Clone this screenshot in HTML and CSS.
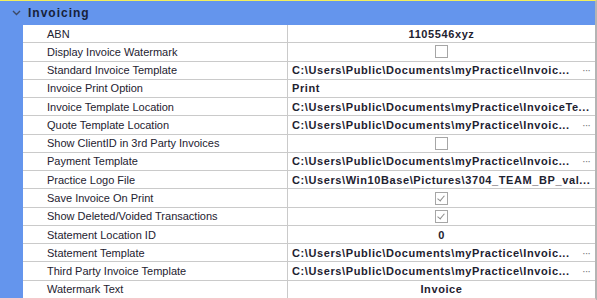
FILE: index.html
```html
<!DOCTYPE html>
<html lang="en">
    <head>
        <meta charset="UTF-8">
        <title>Invoicing</title>
        <link rel="stylesheet" href="styles.css">
    </head>
    <body>
        <div class="grid">
            <div class="category">
                <svg class="chevron" width="9" height="6" viewBox="0 0 9 6"><path d="M1 1 L4.5 4.5 L8 1" fill="none" stroke="#3d4a66" stroke-width="1.4"/></svg>
                <span>Invoicing</span>
            </div>
            <div class="body">
                <div class="gutter"></div>
                <div class="rows">
                    <div class="row"><div class="name">ABN</div><div class="value center">1105546xyz</div></div>
                    <div class="row"><div class="name">Display Invoice Watermark</div><div class="value center"><span class="check"></span></div></div>
                    <div class="row"><div class="name">Standard Invoice Template</div><div class="value"><span class="text">C:\Users\Public\Documents\myPractice\Invoic...</span><span class="dots">···</span></div></div>
                    <div class="row"><div class="name">Invoice Print Option</div><div class="value"><span class="text">Print</span></div></div>
                    <div class="row"><div class="name">Invoice Template Location</div><div class="value"><span class="text">C:\Users\Public\Documents\myPractice\InvoiceTe...</span></div></div>
                    <div class="row"><div class="name">Quote Template Location</div><div class="value"><span class="text">C:\Users\Public\Documents\myPractice\Invoic...</span><span class="dots">···</span></div></div>
                    <div class="row"><div class="name">Show ClientID in 3rd Party Invoices</div><div class="value center"><span class="check"></span></div></div>
                    <div class="row"><div class="name">Payment Template</div><div class="value"><span class="text">C:\Users\Public\Documents\myPractice\Invoic...</span><span class="dots">···</span></div></div>
                    <div class="row"><div class="name">Practice Logo File</div><div class="value"><span class="text">C:\Users\Win10Base\Pictures\3704_TEAM_BP_val...</span></div></div>
                    <div class="row"><div class="name">Save Invoice On Print</div><div class="value center"><span class="check checked"></span></div></div>
                    <div class="row"><div class="name">Show Deleted/Voided Transactions</div><div class="value center"><span class="check checked"></span></div></div>
                    <div class="row"><div class="name">Statement Location ID</div><div class="value center">0</div></div>
                    <div class="row"><div class="name">Statement Template</div><div class="value"><span class="text">C:\Users\Public\Documents\myPractice\Invoic...</span><span class="dots">···</span></div></div>
                    <div class="row"><div class="name">Third Party Invoice Template</div><div class="value"><span class="text">C:\Users\Public\Documents\myPractice\Invoic...</span><span class="dots">···</span></div></div>
                    <div class="row"><div class="name">Watermark Text</div><div class="value center">Invoice</div></div>
                </div>
            </div>
        </div>
    </body>
</html>
```
FILE: styles.css
```css
body {
    margin: 0;
    font-family: "Liberation Sans", Arial, sans-serif;
    font-size: 11px;
    color: #1e2230;
    background: #fff;
}
.grid {
    width: 595px;
    height: 297px;
    border-top: 1px solid #f2ee5c;
    border-right: 2px solid #b4b4b4;
    border-bottom: 3px solid #f6c9cc;
    display: flex;
    flex-direction: column;
}
.category {
    height: 24px;
    background: #6495ed;
    display: flex;
    align-items: center;
    font-weight: bold;
    font-size: 12px;
    letter-spacing: 1px;
    color: #17223a;
}
.chevron {
    margin: 0 7px 0 12px;
}
.body {
    flex: 1;
    display: flex;
}
.gutter {
    width: 23px;
    background: #6495ed;
}
.rows {
    flex: 1;
    display: flex;
    flex-direction: column;
}
.row {
    flex: 1;
    display: flex;
    border-bottom: 1px solid #cacaca;
}
.row:last-child {
    border-bottom: none;
}
.name {
    width: 240px;
    padding-left: 24px;
    border-right: 1px solid #cacaca;
    display: flex;
    align-items: center;
    white-space: nowrap;
}
.value {
    flex: 1;
    display: flex;
    align-items: center;
    padding-left: 4px;
    font-weight: bold;
    letter-spacing: 0.6px;
    white-space: nowrap;
    overflow: hidden;
}
.value.center {
    justify-content: center;
    padding-left: 0;
}
.text {
    flex: 1;
    overflow: hidden;
}
.dots {
    color: #7a7a7a;
    font-weight: normal;
    width: 13px;
    letter-spacing: -1px;
}
.check {
    width: 11px;
    height: 11px;
    border: 1px solid #a6a6a6;
    background: #fff;
    position: relative;
}
.check.checked::after {
    content: "";
    position: absolute;
    left: 3px;
    top: 1px;
    width: 3px;
    height: 6px;
    border: solid #8c8c8c;
    border-width: 0 1.5px 1.5px 0;
    transform: rotate(40deg);
}
```
